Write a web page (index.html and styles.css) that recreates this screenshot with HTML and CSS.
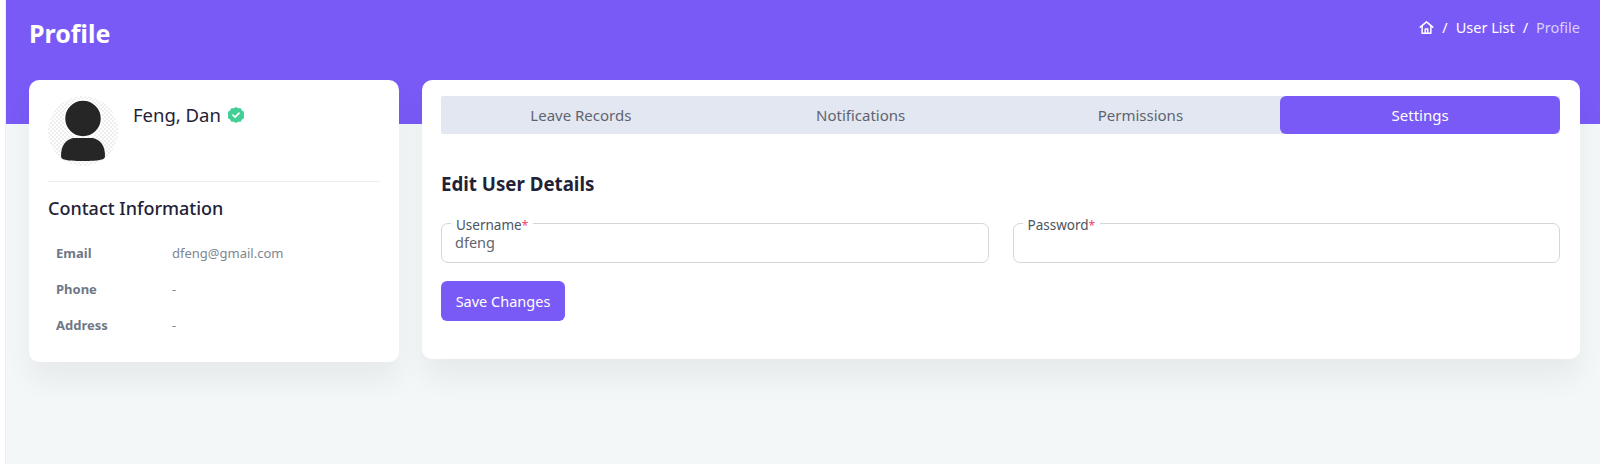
FILE: index.html
```html
<!DOCTYPE html>
<html lang="en">
<head>
  <meta charset="UTF-8">
  <meta name="viewport" content="width=device-width, initial-scale=1.0">
  <title>Profile</title>
  <link rel="stylesheet" href="styles.css">
</head>
<body>
  <div class="rail"></div>

  <main class="main">
    <header class="hero">
      <h1>Profile</h1>
      <nav class="crumbs">
        <a href="#" class="crumb-home" aria-label="Home">
          <svg width="15" height="15" viewBox="0 0 24 24" fill="none" stroke="#fff" stroke-width="2.400" stroke-linejoin="round" stroke-linecap="round">
            <path d="M2 11.500 12 3l10 8.500"/>
            <path d="M5 9.500V21h14V9.500"/>
            <path d="M10 21v-6.500h4V21"/>
          </svg>
        </a>
        <span class="sep">/</span>
        <a href="#">User List</a>
        <span class="sep">/</span>
        <span class="crumb-current">Profile</span>
      </nav>
    </header>

    <div class="content">
      <aside class="card user-card">
        <div class="user-head">
          <svg class="avatar" width="70" height="70" viewBox="0 0 70 70">
            <defs>
              <pattern id="checks" width="4" height="4" patternUnits="userSpaceOnUse">
                <rect width="4" height="4" fill="#fff"/>
                <rect width="2" height="2" fill="#efefef"/>
                <rect x="2" y="2" width="2" height="2" fill="#efefef"/>
              </pattern>
            </defs>
            <circle cx="35" cy="35" r="35" fill="url(#checks)"/>
            <path d="M13 60c0-10 4-16 12-18h20c8 2 12 8 12 18 0 2-1 3-3 3.500-7 2-31 2-38 0-2-.5-3-1.500-3-3.500z" fill="#262626"/>
            <circle cx="35" cy="22.500" r="18.500" fill="#262626" stroke="#fff" stroke-width="1.500"/>
          </svg>
          <div class="user-name">
            Feng, Dan
            <svg class="badge" width="16" height="16" viewBox="0 0 16 16">
              <path d="M8 0l2.200 1.300 2.500-.1 1.200 2.200 2.100 1.300-.1 2.500L16 8l-.1.800.1 2.500-2.100 1.300-1.200 2.200-2.500-.1L8 16l-2.200-1.300-2.500.1-1.200-2.200L0 11.300l.1-2.500L0 8l.1-.8L0 4.700l2.100-1.300 1.200-2.200 2.500.1z" fill="#41cf95"/>
              <path d="M5 8.200l2.100 2 3.900-4" fill="none" stroke="#fff" stroke-width="1.800" stroke-linecap="round" stroke-linejoin="round"/>
            </svg>
          </div>
        </div>

        <h2 class="contact-title">Contact Information</h2>
        <table class="contact-table">
          <tr><th>Email</th><td>dfeng@gmail.com</td></tr>
          <tr><th>Phone</th><td>-</td></tr>
          <tr><th>Address</th><td>-</td></tr>
        </table>
      </aside>

      <section class="card detail-card">
        <div class="tabs">
          <a href="#" class="tab">Leave Records</a>
          <a href="#" class="tab">Notifications</a>
          <a href="#" class="tab">Permissions</a>
          <a href="#" class="tab active">Settings</a>
        </div>

        <h2 class="form-title">Edit User Details</h2>
        <form>
          <div class="form-row">
            <fieldset class="field">
              <legend>Username<span class="req">*</span></legend>
              <input type="text" value="dfeng">
            </fieldset>
            <fieldset class="field">
              <legend>Password<span class="req">*</span></legend>
              <input type="password">
            </fieldset>
          </div>
          <button type="submit" class="save-btn">Save Changes</button>
        </form>
      </section>
    </div>
  </main>
</body>
</html>
```

FILE: styles.css
```css
* {
  box-sizing: border-box;
}
body {
  font-family: 'Noto Sans', 'Lato', sans-serif;
  background-color: #f4f7f8;
  margin: 0;
  height: 464px;
  overflow: hidden;
  display: flex;
  color: #1f2238;
}
.rail {
  width: 6px;
  flex-shrink: 0;
  background-color: #fff;
  border-right: 1px solid #eceff2;
}
.main {
  flex: 1;
  min-width: 0;
}
.hero {
  height: 124px;
  background-color: #7a5af6;
  padding: 15px 20px 0 23px;
  display: flex;
  justify-content: space-between;
  align-items: flex-start;
  color: #fff;
}
.hero h1 {
  margin: 0;
  font-size: 25px;
  line-height: 36px;
  font-weight: 700;
}
.crumbs {
  display: flex;
  align-items: center;
  gap: 8px;
  font-size: 14.500px;
  line-height: 24px;
}
.crumbs a {
  color: #fff;
  text-decoration: none;
}
.crumb-home {
  display: flex;
}
.crumb-current {
  color: #d9d0fd;
}
.content {
  display: flex;
  align-items: flex-start;
  gap: 23px;
  margin-top: -44px;
  padding: 0 20px 0 23px;
}
.card {
  background-color: #fff;
  border-radius: 10px;
  box-shadow: 0 20px 27px rgba(0, 0, 0, 0.05);
}
.user-card {
  width: 370px;
  height: 282px;
  flex-shrink: 0;
  padding: 16px 19px;
}
.user-head {
  display: flex;
  gap: 15px;
  padding-bottom: 15px;
  border-bottom: 1px solid #ebedef;
}
.avatar {
  display: block;
}
.user-name {
  font-size: 18.500px;
  line-height: 24px;
  margin-top: 7px;
  display: flex;
  align-items: center;
  gap: 7px;
  height: 24px;
}
.contact-title {
  margin: 14px 0 0;
  font-size: 18px;
  line-height: 24px;
  font-weight: 500;
}
.contact-table {
  border-collapse: collapse;
  margin-top: 15px;
  font-size: 13px;
}
.contact-table th {
  width: 124px;
  height: 36px;
  padding: 0 0 0 8px;
  text-align: left;
  font-weight: 700;
  color: #6f7785;
}
.contact-table td {
  padding: 0;
  color: #7d8592;
}
.detail-card {
  flex: 1;
  min-width: 0;
  height: 279px;
  padding: 16px 20px 16px 19px;
}
.tabs {
  display: grid;
  grid-template-columns: repeat(4, 1fr);
  background-color: #e3e7f1;
  height: 38px;
  border-radius: 2px;
}
.tab {
  display: flex;
  align-items: center;
  justify-content: center;
  color: #5d6470;
  text-decoration: none;
  font-size: 15px;
}
.tab.active {
  background-color: #7a5af6;
  color: #fff;
  border-radius: 6px;
}
.form-title {
  margin: 38px 0 0;
  font-size: 18.700px;
  line-height: 24px;
  font-weight: 700;
}
.form-row {
  display: grid;
  grid-template-columns: 1fr 1fr;
  gap: 24px;
  margin-top: 18px;
}
.field {
  margin: 0;
  min-width: 0;
  height: 49px;
  padding: 0 13px;
  border: 1px solid #d3d6da;
  border-radius: 7px;
}
.field legend {
  margin-left: -4px;
  padding: 4px 5px 0;
  font-size: 13.500px;
  line-height: 14px;
  color: #4c5361;
}
.req {
  color: #f1416c;
  font-size: 12px;
}
.field input {
  display: block;
  width: 100%;
  border: none;
  outline: none;
  padding: 0;
  margin-top: -1px;
  background: none;
  font-family: inherit;
  font-size: 14.500px;
  line-height: 20px;
  height: 20px;
  color: #5f6673;
}
.save-btn {
  display: block;
  margin-top: 18px;
  width: 124px;
  height: 40px;
  background-color: #7a5af6;
  color: white;
  border: none;
  border-radius: 6px;
  font-family: inherit;
  font-size: 14.500px;
  cursor: pointer;
}
```
